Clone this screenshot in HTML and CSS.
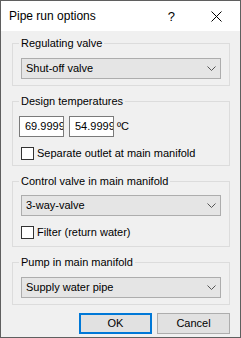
FILE: index.html
```html
<!DOCTYPE html>
<html>
<head>
	<meta charset="UTF-8">
	<title>Pipe run options</title>
	<link rel="stylesheet" href="styles.css">
</head>
<body>
	<div class="dialog">
		<div class="titlebar">
			<span class="title">Pipe run options</span>
			<span class="help">?</span>
			<svg class="close" width="11" height="11" viewBox="0 0 11 11">
				<path d="M0.5 0.5 L10.5 10.5 M10.5 0.5 L0.5 10.5" stroke="#000" stroke-width="1" fill="none"/>
			</svg>
		</div>
		<div class="client">
			<fieldset class="group g1">
				<legend>Regulating valve</legend>
				<div class="combo"><span>Shut-off valve</span><svg class="chev" width="9" height="5" viewBox="0 0 9 5"><path d="M0.5 0.5 L4.5 4.5 L8.5 0.5" stroke="#555" fill="none"/></svg></div>
			</fieldset>
			<fieldset class="group g2">
				<legend>Design temperatures</legend>
				<div class="temps">
					<div class="edit">69.9999</div>
					<div class="edit">54.9999</div>
					<span class="unit">ºC</span>
				</div>
				<label class="check"><span class="box"></span>Separate outlet at main manifold</label>
			</fieldset>
			<fieldset class="group g3">
				<legend>Control valve in main manifold</legend>
				<div class="combo"><span>3-way-valve</span><svg class="chev" width="9" height="5" viewBox="0 0 9 5"><path d="M0.5 0.5 L4.5 4.5 L8.5 0.5" stroke="#555" fill="none"/></svg></div>
				<label class="check"><span class="box"></span>Filter (return water)</label>
			</fieldset>
			<fieldset class="group g4">
				<legend>Pump in main manifold</legend>
				<div class="combo"><span>Supply water pipe</span><svg class="chev" width="9" height="5" viewBox="0 0 9 5"><path d="M0.5 0.5 L4.5 4.5 L8.5 0.5" stroke="#555" fill="none"/></svg></div>
			</fieldset>
			<div class="buttons">
				<div class="btn default">OK</div>
				<div class="btn">Cancel</div>
			</div>
		</div>
	</div>
</body>
</html>
```

FILE: styles.css
```css
* {
	margin: 0;
	padding: 0;
	box-sizing: border-box;
}

body {
	font: 11px/15px "Liberation Sans", Arial, sans-serif;
	color: #000;
	background: #f0f0f0;
}

.dialog {
	width: 241px;
	height: 338px;
	border: 1px solid #5f5f5f;
	background: #f0f0f0;
	display: flex;
	flex-direction: column;
}

.titlebar {
	height: 30px;
	background: #fff;
	display: flex;
	align-items: center;
}

.title {
	margin-left: 8px;
	font-size: 12px;
}

.help {
	margin-left: auto;
	margin-right: 36px;
	font-size: 13px;
}

.close {
	margin-right: 18px;
}

.client {
	padding: 5px 10px 0 11px;
}

.group {
	border: 1px solid #dcdcdc;
	padding: 7px 8px 6px 8px;
	margin-bottom: 8px;
}

.group legend {
	margin-left: -2px;
	padding: 0 2px;
	line-height: 15px;
}

.g2 {
	padding-bottom: 5px;
}

.g3 {
	padding-top: 6px;
	padding-bottom: 7px;
}

.combo {
	height: 21px;
	border: 1px solid #adadad;
	background: #e5e5e5;
	display: flex;
	align-items: center;
	padding: 0 4px 0 4px;
}

.combo .chev {
	margin-left: auto;
}

.temps {
	display: flex;
	align-items: center;
	gap: 5px;
	margin-left: -2px;
}

.edit {
	width: 45px;
	height: 21px;
	border: 1px solid #7a7a7a;
	background: #fff;
	padding-left: 5px;
	line-height: 19px;
	overflow: hidden;
	white-space: nowrap;
}

.unit {
	margin-left: -2px;
}

.check {
	display: flex;
	align-items: center;
	margin-top: 10px;
	height: 13px;
}

.check .box {
	width: 13px;
	height: 13px;
	border: 1px solid #333;
	background: #fff;
	margin-right: 3px;
}

.buttons {
	display: flex;
	justify-content: flex-end;
	gap: 5px;
}

.btn {
	width: 73px;
	height: 21px;
	border: 1px solid #adadad;
	background: #e1e1e1;
	text-align: center;
	line-height: 19px;
}

.btn.default {
	border: 2px solid #0078d7;
	line-height: 17px;
}
```
